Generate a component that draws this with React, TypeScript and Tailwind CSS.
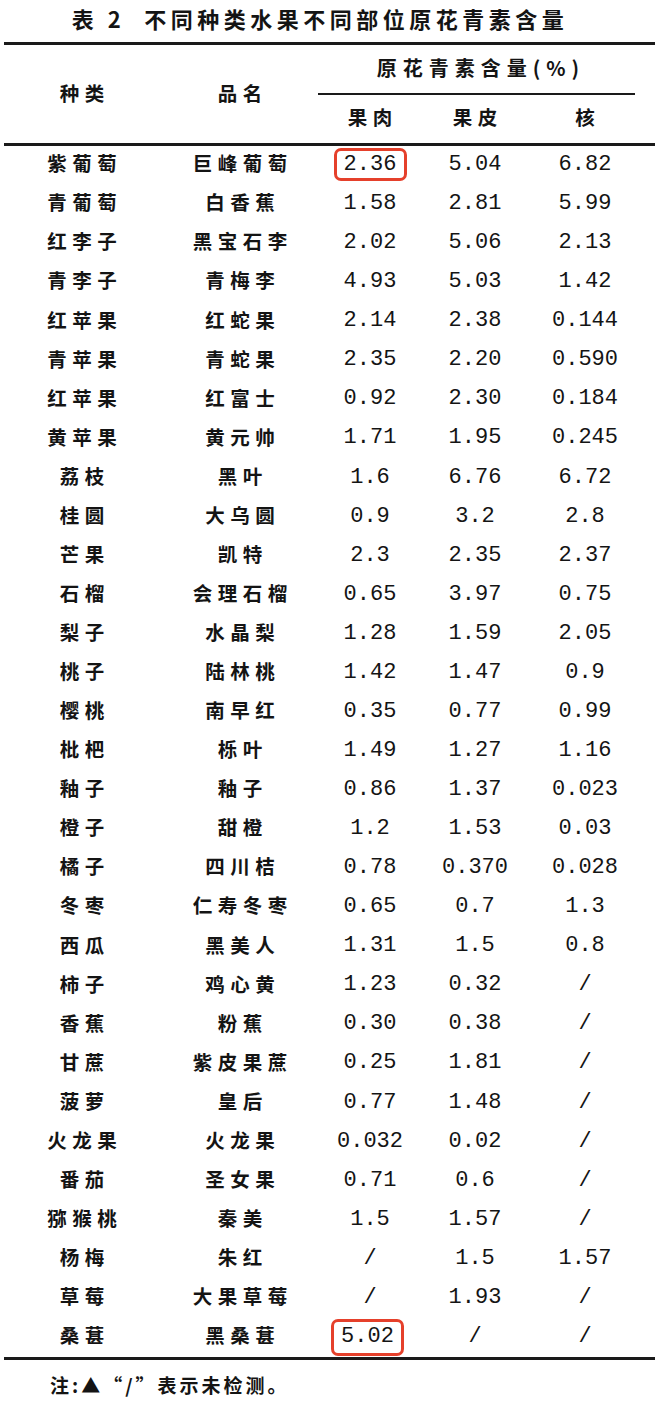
import React from "react";

type Row = [string, string, string, string, string];

const rows: Row[] = [
  ["紫葡萄", "巨峰葡萄", "2.36", "5.04", "6.82"],
  ["青葡萄", "白香蕉", "1.58", "2.81", "5.99"],
  ["红李子", "黑宝石李", "2.02", "5.06", "2.13"],
  ["青李子", "青梅李", "4.93", "5.03", "1.42"],
  ["红苹果", "红蛇果", "2.14", "2.38", "0.144"],
  ["青苹果", "青蛇果", "2.35", "2.20", "0.590"],
  ["红苹果", "红富士", "0.92", "2.30", "0.184"],
  ["黄苹果", "黄元帅", "1.71", "1.95", "0.245"],
  ["荔枝", "黑叶", "1.6", "6.76", "6.72"],
  ["桂圆", "大乌圆", "0.9", "3.2", "2.8"],
  ["芒果", "凯特", "2.3", "2.35", "2.37"],
  ["石榴", "会理石榴", "0.65", "3.97", "0.75"],
  ["梨子", "水晶梨", "1.28", "1.59", "2.05"],
  ["桃子", "陆林桃", "1.42", "1.47", "0.9"],
  ["樱桃", "南早红", "0.35", "0.77", "0.99"],
  ["枇杷", "栎叶", "1.49", "1.27", "1.16"],
  ["釉子", "釉子", "0.86", "1.37", "0.023"],
  ["橙子", "甜橙", "1.2", "1.53", "0.03"],
  ["橘子", "四川桔", "0.78", "0.370", "0.028"],
  ["冬枣", "仁寿冬枣", "0.65", "0.7", "1.3"],
  ["西瓜", "黑美人", "1.31", "1.5", "0.8"],
  ["柿子", "鸡心黄", "1.23", "0.32", "/"],
  ["香蕉", "粉蕉", "0.30", "0.38", "/"],
  ["甘蔗", "紫皮果蔗", "0.25", "1.81", "/"],
  ["菠萝", "皇后", "0.77", "1.48", "/"],
  ["火龙果", "火龙果", "0.032", "0.02", "/"],
  ["番茄", "圣女果", "0.71", "0.6", "/"],
  ["猕猴桃", "秦美", "1.5", "1.57", "/"],
  ["杨梅", "朱红", "/", "1.5", "1.57"],
  ["草莓", "大果草莓", "/", "1.93", "/"],
  ["桑葚", "黑桑葚", "5.02", "/", "/"],
];

const cjk = "font-['Noto_Sans_CJK_SC',sans-serif]";
const mono = "font-['Liberation_Mono','DejaVu_Sans_Mono',monospace]";
const grid = "grid grid-cols-[156px_160px_100px_110px_110px]";

function Han({ text, className = "" }: { text: string; className?: string }) {
  return (
    <span
      className={`${cjk} font-semibold text-[19.5px] leading-none tracking-[5.5px] pl-[5.5px] pb-[4px] ${className}`}
    >
      {text}
    </span>
  );
}

function Num({ text, boxed, idx }: { text: string; boxed?: boolean; idx: number }) {
  const t = <span className={`${mono} text-[22px] leading-none`}>{text}</span>;
  if (boxed) {
    return (
      <span
        className={`flex items-center justify-center border-[3px] border-[#e5402b] rounded-[7px] w-[73px] ${
          idx === 0 ? "h-[33px] mt-[-1px]" : "h-[37px] mt-[1px] ml-[-5px]"
        }`}
      >
        {t}
      </span>
    );
  }
  return t;
}

export default function App() {
  return (
    <div className="w-[660px] h-[1403px] bg-white text-[#141414] overflow-hidden">
      <div className="h-[38px] flex items-center justify-center pr-[20px] pt-[1px]">
        <span className={`${cjk} font-bold text-[22px] tracking-[4.5px] leading-none pb-[3px]`}>
          表 2&nbsp;&nbsp;不同种类水果不同部位原花青素含量
        </span>
      </div>
      <div className="mx-[4px] w-[651px] mt-[4px]">
        <div className="h-[3px] bg-[#1a1a1a]" />
        <div className={`${grid} h-[98px]`}>
          <div className="flex items-center justify-center pt-[2px]">
            <Han text="种类" className="font-bold" />
          </div>
          <div className="flex items-center justify-center pt-[2px]">
            <Han text="品名" className="font-bold" />
          </div>
          <div className="col-span-3 flex flex-col">
            <div className="h-[48px] flex items-center justify-center pr-[4px]">
              <span
                className={`${cjk} font-semibold text-[20px] tracking-[6px] pl-[6px] pb-[3px] leading-none`}
              >
                原花青素含量(%)
              </span>
            </div>
            <div className="h-[2px] bg-[#1a1a1a] mr-[5px] ml-[-2px]" />
            <div className="flex-1 grid grid-cols-[100px_110px_110px]">
              <div className="flex items-center justify-center">
                <Han text="果肉" />
              </div>
              <div className="flex items-center justify-center">
                <Han text="果皮" />
              </div>
              <div className="flex items-center justify-center">
                <Han text="核" />
              </div>
            </div>
          </div>
        </div>
        <div className="h-[2.5px] bg-[#1a1a1a]" />
        <div className="flex flex-col">
          {rows.map((r, i) => (
            <div key={i} className={`${grid} h-[39.07px]`}>
              <div className="flex items-center justify-center">
                <Han text={r[0]} />
              </div>
              <div className="flex items-center justify-center">
                <Han text={r[1]} />
              </div>
              {[r[2], r[3], r[4]].map((v, j) => (
                <div key={j} className="flex items-center justify-center">
                  <Num
                    text={v}
                    idx={i}
                    boxed={j === 0 && (i === 0 || i === rows.length - 1)}
                  />
                </div>
              ))}
            </div>
          ))}
        </div>
        <div className="h-[3px] bg-[#1a1a1a] mt-[1px]" />
      </div>
      <div className="pl-[50px] pt-[15px] flex items-center">
        <span className={`${cjk} font-semibold text-[19px] leading-none tracking-[3px] pb-[3px]`}>
          注:▲“/”表示未检测。
        </span>
      </div>
    </div>
  );
}
